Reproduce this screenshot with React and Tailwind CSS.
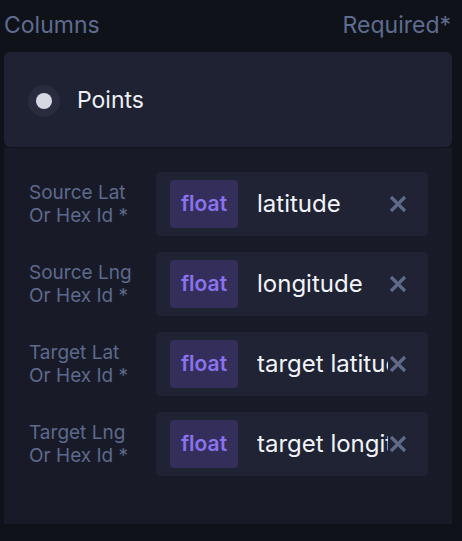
import React from "react";

const rows = [
  { l1: "Source Lat", l2: "Or Hex Id *", v: "latitude" },
  { l1: "Source Lng", l2: "Or Hex Id *", v: "longitude" },
  { l1: "Target Lat", l2: "Or Hex Id *", v: "target latitude" },
  { l1: "Target Lng", l2: "Or Hex Id *", v: "target longitude" },
];

function X() {
  return (
    <svg width="20" height="20" viewBox="0 0 20 20" className="shrink-0">
      <path d="M3 3 L17 17 M17 3 L3 17" stroke="#5f6a89" strokeWidth="3.2" strokeLinecap="butt" />
    </svg>
  );
}

export default function App() {
  return (
    <div className="w-[462px] h-[541px] bg-[#10121a] overflow-hidden" style={{ fontFamily: "Inter, 'Open Sans', sans-serif" }}>
      <div className="flex justify-between items-center px-[4px] pt-[2px] h-[48px] text-[23px] text-[#5e6c90]">
        <span>Columns</span>
        <span className="pr-[7px]">Required*</span>
      </div>
      <div className="mx-[4px] w-[448px]">
        <div className="h-[95px] mt-[4px] bg-[#1e2233] rounded-[6px] flex items-center pl-[24px] pt-[2px]">
          <div className="w-[32px] h-[32px] rounded-full bg-[#282c3e] flex items-center justify-center">
            <div className="w-[16px] h-[16px] rounded-full bg-[#d6d9e2]" />
          </div>
          <span className="ml-[17px] text-[23px] text-[#eef0f5]">Points</span>
        </div>
        <div className="bg-[#181b27] h-[376px] mt-[1px] pt-[24px] flex flex-col gap-[16px]">
          {rows.map((r, i) => (
            <div key={i} className="flex items-center">
              <div className="w-[152px] pl-[25px] text-[19px] leading-[23px] text-[#5c6a8d] whitespace-nowrap">
                <div>{r.l1}</div>
                <div>{r.l2}</div>
              </div>
              <div className="w-[272px] h-[64px] bg-[#1f2334] rounded-[4px] flex items-center pl-[14px] pr-[20px]">
                <div className="w-[68px] h-[48px] rounded-[4px] bg-[#332f5a] flex items-center justify-center text-[21px] font-semibold text-[#8b72ee]">
                  float
                </div>
                <div className="ml-[19px] flex-1 min-w-0 overflow-hidden whitespace-nowrap text-[24px] text-[#f2f3f7]">
                  {r.v}
                </div>
                <X />
              </div>
            </div>
          ))}
        </div>
      </div>
    </div>
  );
}
